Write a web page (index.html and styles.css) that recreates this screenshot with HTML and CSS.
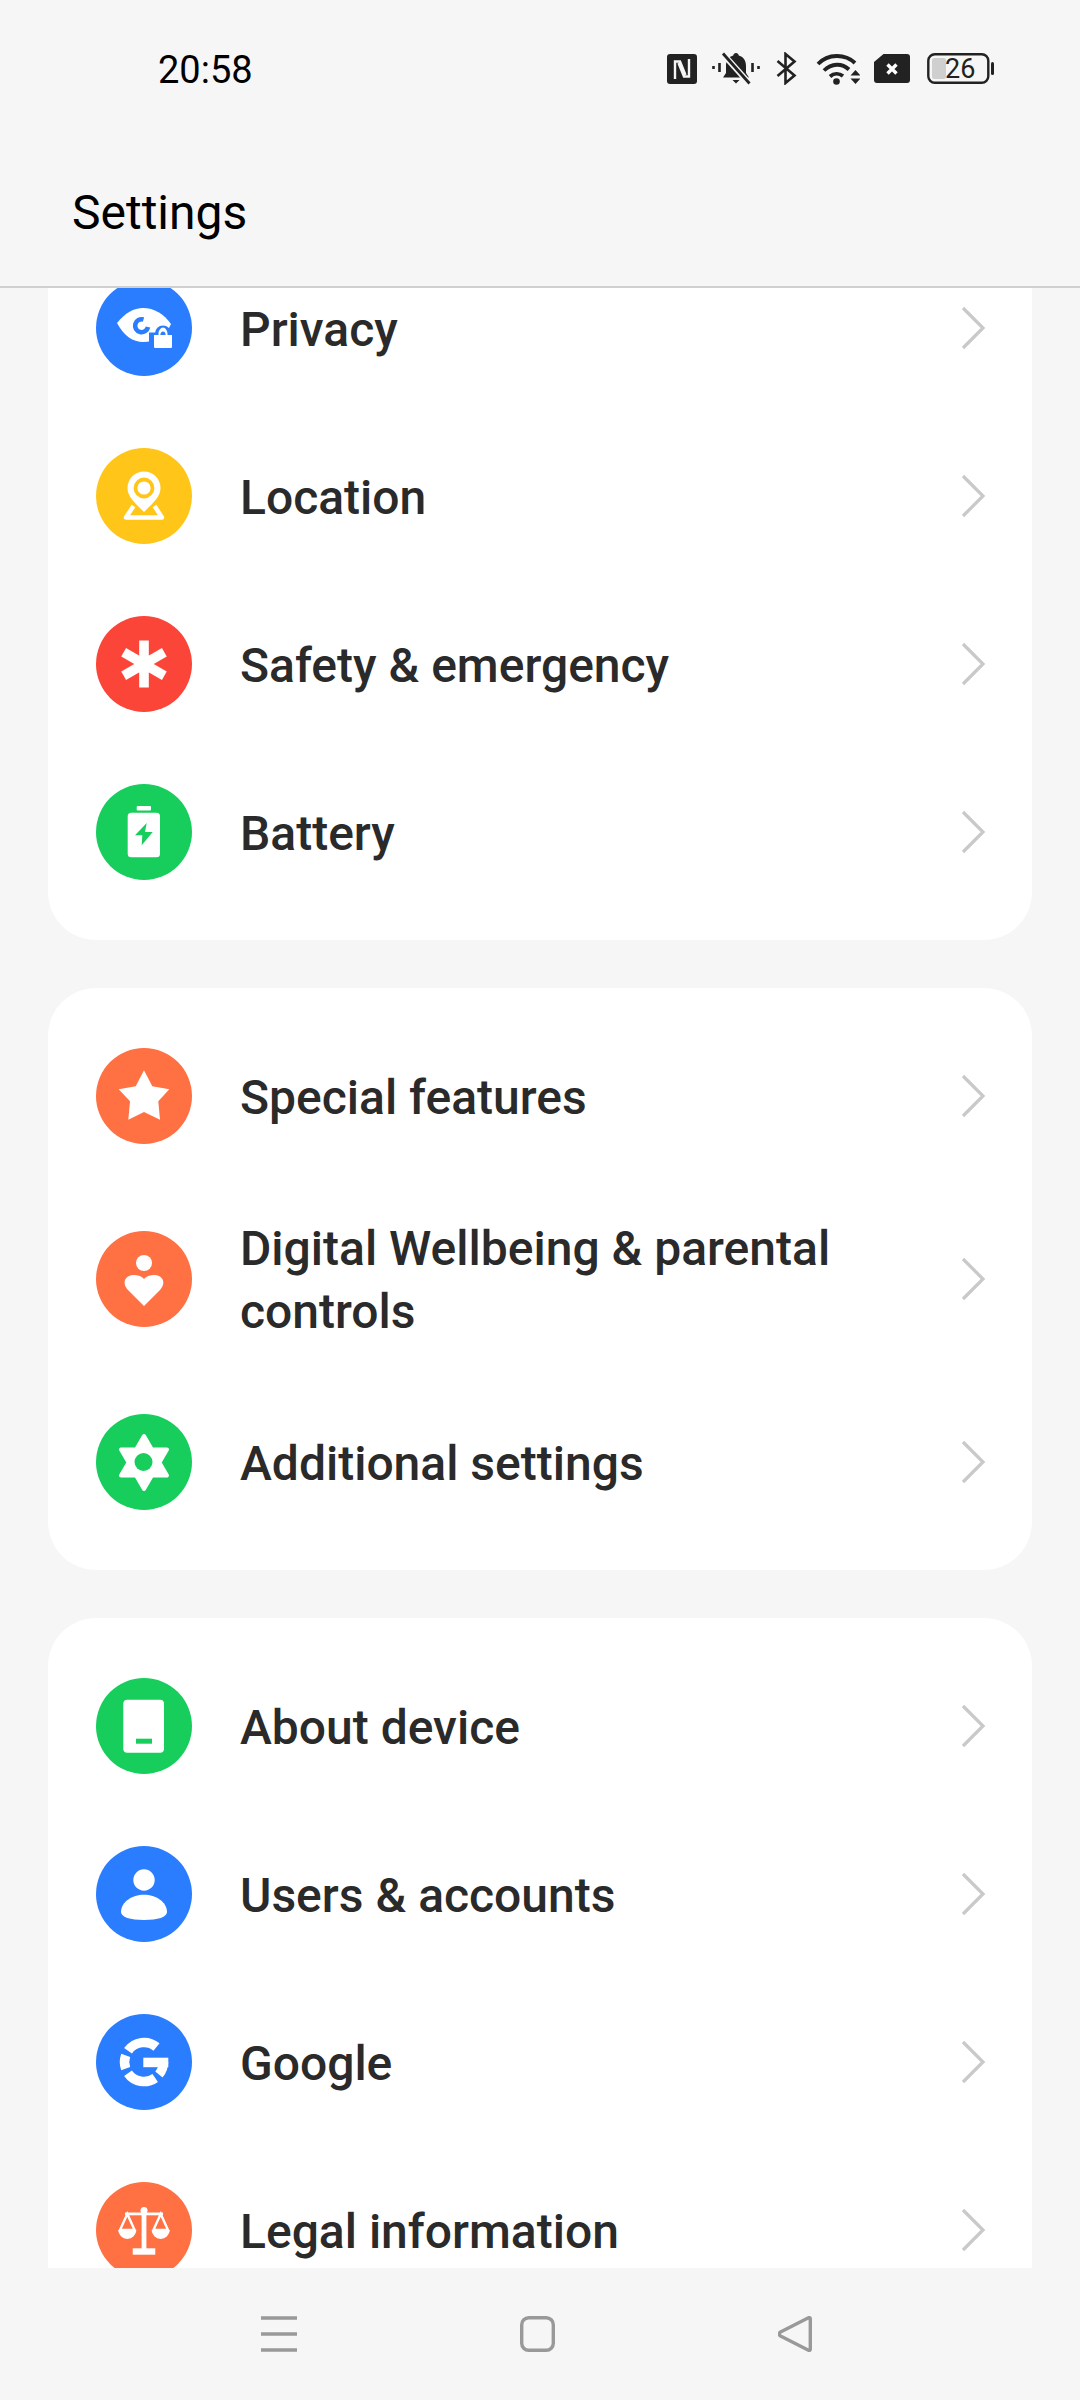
FILE: index.html
```html
<!DOCTYPE html>
<html lang="en">
<head>
<meta charset="utf-8">
<title>Settings</title>
<link rel="stylesheet" href="styles.css">
</head>
<body>
<div class="phone">
  <header class="top">
    <div class="status">
      <span class="time">20:58</span>
      <div class="status-icons">
        <svg class="si-nfc" viewBox="0 0 30 30"><rect width="30" height="30" rx="3" fill="#222"/><path d="M8 25V7.500h5L18.500 21M22 5v17.500h-5L11.500 9" fill="none" stroke="#f6f6f6" stroke-width="2.400"/></svg>
        <svg class="si-bell" viewBox="0 0 48 33"><path d="M24 1c1.500 0 2.500 1 2.800 2.500C32 5 34 9 34 14v7l3 4.500H11l3-4.500v-7c0-5 2-9 7.200-10.500C21.500 2 22.500 1 24 1Z" fill="#222"/><path d="M20.500 28h7l-3.500 3.500Z" fill="#222"/><path d="M11 2l26 29" stroke="#f6f6f6" stroke-width="6"/><path d="M11 1.500l26.500 30" stroke="#222" stroke-width="2.800"/><path d="M1.500 14v3M7.500 11v9M40.500 11v9M46.500 14v3" stroke="#222" stroke-width="2.600" fill="none"/></svg>
        <svg class="si-bt" viewBox="0 0 21 33"><path d="M1.500 9l17 14.500L9.500 31V2l9 7.500L1.500 24" fill="none" stroke="#222" stroke-width="2.600" stroke-linejoin="miter"/></svg>
        <svg class="si-wifi" viewBox="0 0 44 33"><path d="M2 12C12 1.500 29 1.500 39 11M8 18.500C15.500 11 26 11 33 17.500M14 24.500C18 21 23 21 27 24" fill="none" stroke="#222" stroke-width="3.800"/><circle cx="20.500" cy="29.500" r="3.300" fill="#222"/><path d="M34.500 23.500l5-5.500 5 5.500ZM34.500 26.500h10l-5 5.500Z" fill="#222"/></svg>
        <svg class="si-sim" viewBox="0 0 36 29"><path d="M9.500 0H33a3 3 0 0 1 3 3v23a3 3 0 0 1-3 3H3a3 3 0 0 1-3-3V8Z" fill="#222"/><path d="M13.500 10.500l9 9M22.500 10.500l-9 9" stroke="#fff" stroke-width="3.400"/></svg>
        <svg class="si-batt" viewBox="0 0 67 31"><rect x="1.300" y="1.300" width="60" height="28.400" rx="6.500" fill="none" stroke="#222" stroke-width="2.400"/><rect x="5" y="5" width="14" height="21" rx="2.500" fill="#cfcfcf"/><text x="18" y="25" class="batt-text">26</text><rect x="64" y="9" width="3" height="13" rx="1.500" fill="#222"/></svg>
      </div>
    </div>
    <h1 class="title">Settings</h1>
  </header>

  <main class="scroller">
    <div class="list">
      <section class="card">
        <div class="row">
          <svg class="ico" viewBox="0 0 96 96"><circle cx="48" cy="48" r="48" fill="#2b7dff"/><path d="M21 43C29 33 38 28 47 28c11 0 21 6 28 16-5 12-16 18-28 18-10 0-19-6-26-19Z" fill="#fff"/><path d="M47.500 39.500A6.500 6.500 0 1 0 52 47" fill="none" stroke="#2b7dff" stroke-width="4.600"/><path d="M53 52.500h25V71H53Z" fill="#2b7dff"/><path d="M62 55v-1.500a5 5 0 0 1 10 0V55" fill="none" stroke="#2b7dff" stroke-width="6"/><path d="M58 55h4.500v-1.500c0-3 2.500-6 4.500-6s4.500 3 4.500 6V55H76v12a1 1 0 0 1-1 1H59a1 1 0 0 1-1-1Z" fill="#fff"/><path d="M67 51.500c1.600 0 2.600 1.300 2.600 3.500h-5.200c0-2.200 1-3.500 2.600-3.500Z" fill="#2b7dff"/></svg>
          <span class="label">Privacy</span>
          <svg class="chev" viewBox="0 0 26 44"><path d="M3 2l20 20L3 42" fill="none" stroke="#c9c9c9" stroke-width="3.200"/></svg>
        </div>
        <div class="row">
          <svg class="ico" viewBox="0 0 96 96"><circle cx="48" cy="48" r="48" fill="#ffc519"/><path d="M37.500 58 30 69.500h36L58.500 58" fill="none" stroke="#fff" stroke-width="4.400" stroke-linejoin="round"/><path d="M48 64C40 56 31.500 49 31.500 40a16.500 16.500 0 0 1 33 0C64.500 49 56 56 48 64Z" fill="#fff"/><circle cx="48" cy="40" r="8.500" fill="#fff" stroke="#ffc519" stroke-width="3.800"/></svg>
          <span class="label">Location</span>
          <svg class="chev" viewBox="0 0 26 44"><path d="M3 2l20 20L3 42" fill="none" stroke="#c9c9c9" stroke-width="3.200"/></svg>
        </div>
        <div class="row">
          <svg class="ico" viewBox="0 0 96 96"><circle cx="48" cy="48" r="48" fill="#fb4538"/><g fill="#fff"><rect x="43.200" y="24.500" width="9.600" height="47"/><rect x="43.200" y="24.500" width="9.600" height="47" transform="rotate(60 48 48)"/><rect x="43.200" y="24.500" width="9.600" height="47" transform="rotate(-60 48 48)"/></g></svg>
          <span class="label">Safety &amp; emergency</span>
          <svg class="chev" viewBox="0 0 26 44"><path d="M3 2l20 20L3 42" fill="none" stroke="#c9c9c9" stroke-width="3.200"/></svg>
        </div>
        <div class="row">
          <svg class="ico" viewBox="0 0 96 96"><circle cx="48" cy="48" r="48" fill="#17ce5d"/><rect x="31.700" y="28.700" width="32.300" height="44.500" rx="3.500" fill="#fff"/><rect x="40.700" y="22" width="14.300" height="4.500" rx="1" fill="#fff"/><path d="M50.700 39 39 51.300h7.300l-.6 10L56.700 48H49Z" fill="#17ce5d"/></svg>
          <span class="label">Battery</span>
          <svg class="chev" viewBox="0 0 26 44"><path d="M3 2l20 20L3 42" fill="none" stroke="#c9c9c9" stroke-width="3.200"/></svg>
        </div>
      </section>

      <section class="card">
        <div class="row">
          <svg class="ico" viewBox="0 0 96 96"><circle cx="48" cy="48" r="48" fill="#ff7043"/><path d="M48 22.300 56.300 38.300 73.300 41.300 62.300 53.300 64 71.700 48 64 32.300 71.700 34 53.300 22.700 41.300 39.700 38.300Z" fill="#fff"/></svg>
          <span class="label">Special features</span>
          <svg class="chev" viewBox="0 0 26 44"><path d="M3 2l20 20L3 42" fill="none" stroke="#c9c9c9" stroke-width="3.200"/></svg>
        </div>
        <div class="row row-tall">
          <svg class="ico" viewBox="0 0 96 96"><circle cx="48" cy="48" r="48" fill="#ff7043"/><circle cx="48" cy="32" r="8" fill="#fff"/><path d="M48 75 32 59c-7-8-2-15 6-15 4 0 8 1.500 10 4 2-2.500 6-4 10-4 8 0 13 7 6 15Z" fill="#fff"/></svg>
          <span class="label">Digital Wellbeing &amp; parental controls</span>
          <svg class="chev" viewBox="0 0 26 44"><path d="M3 2l20 20L3 42" fill="none" stroke="#c9c9c9" stroke-width="3.200"/></svg>
        </div>
        <div class="row">
          <svg class="ico" viewBox="0 0 96 96"><circle cx="48" cy="48" r="48" fill="#17ce5d"/><path d="M48 22 71 61.500H25ZM48 75 25 35.500H71Z" fill="#fff" stroke="#fff" stroke-width="4" stroke-linejoin="round"/><circle cx="47.500" cy="48" r="9" fill="#17ce5d"/></svg>
          <span class="label">Additional settings</span>
          <svg class="chev" viewBox="0 0 26 44"><path d="M3 2l20 20L3 42" fill="none" stroke="#c9c9c9" stroke-width="3.200"/></svg>
        </div>
      </section>

      <section class="card">
        <div class="row">
          <svg class="ico" viewBox="0 0 96 96"><circle cx="48" cy="48" r="48" fill="#17ce5d"/><rect x="27.300" y="21.700" width="40.700" height="53" rx="4" fill="#fff"/><rect x="40" y="60.700" width="16" height="5" fill="#17ce5d"/></svg>
          <span class="label">About device</span>
          <svg class="chev" viewBox="0 0 26 44"><path d="M3 2l20 20L3 42" fill="none" stroke="#c9c9c9" stroke-width="3.200"/></svg>
        </div>
        <div class="row">
          <svg class="ico" viewBox="0 0 96 96"><circle cx="48" cy="48" r="48" fill="#2b7dff"/><circle cx="48" cy="34" r="10.700" fill="#fff"/><path d="M25 66c0-10 11-17.300 23-17.300S71 56 71 66c0 5-9 8-23 8s-23-3-23-8Z" fill="#fff"/></svg>
          <span class="label">Users &amp; accounts</span>
          <svg class="chev" viewBox="0 0 26 44"><path d="M3 2l20 20L3 42" fill="none" stroke="#c9c9c9" stroke-width="3.200"/></svg>
        </div>
        <div class="row">
          <svg class="ico" viewBox="0 0 96 96"><circle cx="48" cy="48" r="48" fill="#2b7dff"/><g fill="none" stroke="#fff" stroke-width="9.500"><path d="M32 36.800A19.500 19.500 0 0 1 60.500 33"/><path d="M29.700 41.300A19.500 19.500 0 0 0 29.700 54.700"/><path d="M32 59.200A19.500 19.500 0 0 0 59.200 64"/><path d="M62.900 60.500A19.500 19.500 0 0 0 67.500 48"/></g><rect x="47.300" y="43.700" width="25" height="9.500" fill="#fff"/></svg>
          <span class="label">Google</span>
          <svg class="chev" viewBox="0 0 26 44"><path d="M3 2l20 20L3 42" fill="none" stroke="#c9c9c9" stroke-width="3.200"/></svg>
        </div>
        <div class="row">
          <svg class="ico" viewBox="0 0 96 96"><circle cx="48" cy="48" r="48" fill="#ff7043"/><g fill="#fff"><circle cx="48" cy="28.500" r="3.500"/><rect x="45.600" y="27" width="4.800" height="40"/><rect x="36.700" y="66.300" width="22.600" height="6.400"/><rect x="29" y="30.500" width="38" height="2.800"/><path d="M22.300 48h18a9 9 0 0 1-18 0ZM55.700 48h18a9 9 0 0 1-18 0Z"/></g><path d="M31.300 32 24 48h14.600ZM64.700 32 57.400 48H72Z" fill="none" stroke="#fff" stroke-width="2.400"/></svg>
          <span class="label">Legal information</span>
          <svg class="chev" viewBox="0 0 26 44"><path d="M3 2l20 20L3 42" fill="none" stroke="#c9c9c9" stroke-width="3.200"/></svg>
        </div>
      </section>
    </div>
  </main>

  <nav class="nav">
    <svg class="nav-menu" viewBox="0 0 36 36"><path d="M0 2h36M0 18h36M0 34h36" stroke="#999" stroke-width="3.400" fill="none"/></svg>
    <svg class="nav-home" viewBox="0 0 35 36"><rect x="1.700" y="1.700" width="31.600" height="32.600" rx="7" fill="none" stroke="#999" stroke-width="3.400"/></svg>
    <svg class="nav-back" viewBox="0 0 34 36"><path d="M30.500 1.800 2.500 16a2.300 2.300 0 0 0 0 4L30.500 34.200c1 .5 1.800 0 1.800-1V2.800c0-1-.8-1.500-1.800-1Z" fill="none" stroke="#999" stroke-width="3.400" stroke-linejoin="round"/></svg>
  </nav>
</div>
</body>
</html>
```
FILE: styles.css
```css
* { box-sizing: border-box; }
html, body { margin: 0; padding: 0; }
body { background: #f6f6f6; font-family: Roboto, "Noto Sans", sans-serif; }

.phone { width: 1080px; height: 2400px; display: flex; flex-direction: column; overflow: hidden; background: #f6f6f6; }

.top { height: 288px; flex: none; border-bottom: 2px solid #cfcfcf; }
.status { height: 138px; padding: 52px 86px 0 158px; display: flex; justify-content: space-between; align-items: flex-start; }
.time { font-size: 38px; line-height: 36px; color: #000; }
.status-icons { display: flex; align-items: center; height: 33px; }
.si-nfc { width: 30px; height: 30px; margin-right: 15px; }
.si-bell { width: 48px; height: 33px; margin-right: 16px; }
.si-bt { width: 21px; height: 33px; margin-right: 19px; }
.si-wifi { width: 44px; height: 33px; margin-right: 14px; }
.si-sim { width: 36px; height: 29px; margin-right: 17px; }
.si-batt { width: 67px; height: 31px; }
.batt-text { font-family: Roboto, sans-serif; font-size: 27px; font-weight: 400; fill: #222; }

.title { margin: 0; padding: 45px 0 0 72px; font-size: 48px; font-weight: 400; line-height: 60px; color: #000; }

.scroller { height: 1980px; flex: none; overflow: hidden; }
.list { margin-top: -44px; padding: 0 48px; display: flex; flex-direction: column; gap: 48px; }
.card { background: #fff; border-radius: 48px; padding: 24px 0; }
.card:first-child { padding-top: 0; border-radius: 0 0 48px 48px; }

.row { height: 168px; padding: 0 46px 0 48px; display: flex; align-items: center; }
.row-tall { height: 198px; }
.ico { width: 96px; height: 96px; flex: none; margin-right: 48px; }
.label { flex: 1; padding-top: 2px; font-size: 48px; font-weight: 500; line-height: 63px; color: #2a2a2a; }
.chev { width: 26px; height: 44px; flex: none; }

.nav { height: 132px; flex: none; padding: 48px 0 0 261px; display: flex; align-items: flex-start; gap: 223px; }
.nav-menu { width: 36px; height: 36px; }
.nav-home { width: 35px; height: 36px; }
.nav-back { width: 34px; height: 36px; }
```
